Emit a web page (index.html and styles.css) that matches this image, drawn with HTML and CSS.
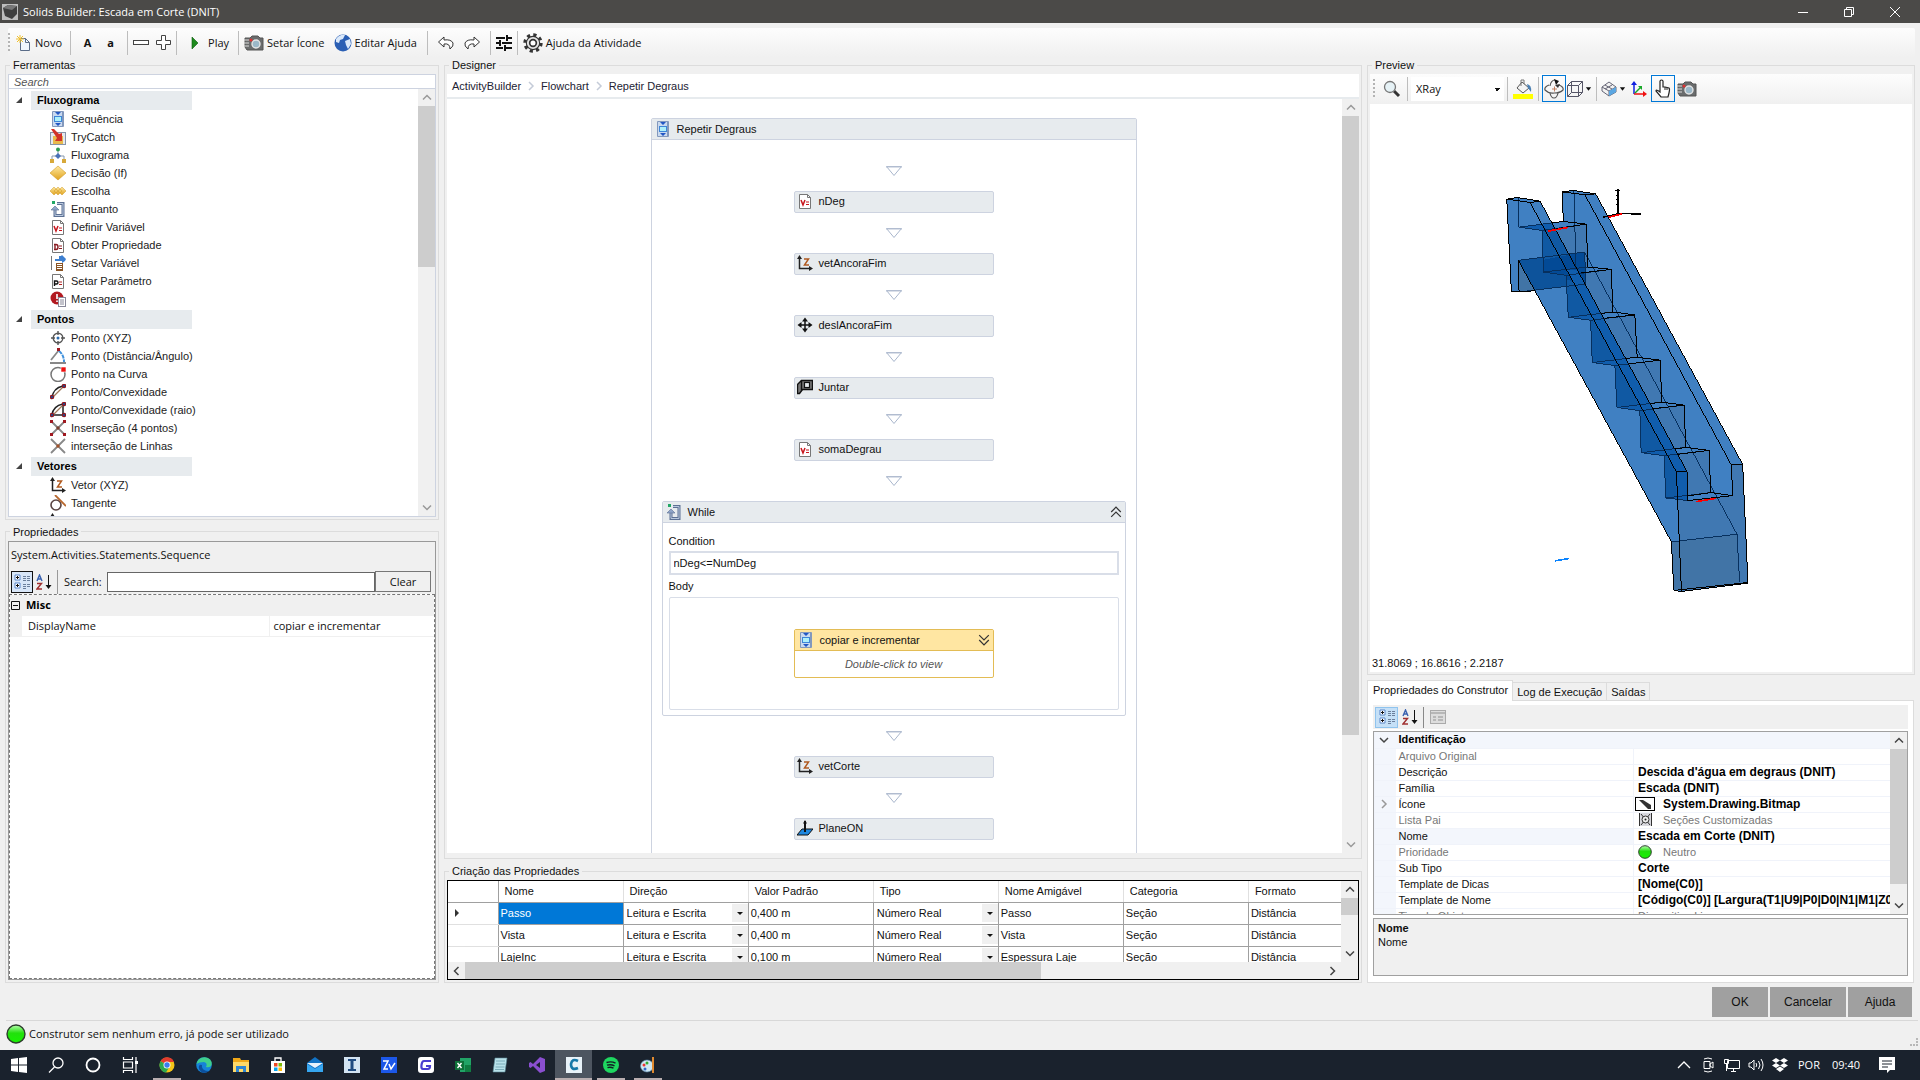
FILE: index.html
```html
<!DOCTYPE html>
<html lang="pt-BR">
<head>
<meta charset="utf-8">
<title>Solids Builder: Escada em Corte (DNIT)</title>
<link rel="stylesheet" href="styles.css">
</head>
<body>
<svg class="defs" aria-hidden="true">
  <defs>
    <linearGradient id="gGold" x1="0" y1="0" x2="0" y2="1"><stop offset="0" stop-color="#ffe9a0"/><stop offset="1" stop-color="#e0a21c"/></linearGradient>
    <linearGradient id="gGreen" x1="0" y1="0" x2="0" y2="1"><stop offset="0" stop-color="#b8ffb0"/><stop offset=".45" stop-color="#22e00c"/><stop offset="1" stop-color="#17f200"/></linearGradient>
    <symbol id="seq" viewBox="0 0 16 16"><rect x="2" y="0" width="12" height="16" rx="1" fill="#8298bd"/><rect x="3" y="1" width="9" height="14" fill="#c9d9ef"/><rect x="4.500" y="5.500" width="7" height="5" fill="#aef0fa" stroke="#3f86d8"/><path d="M5 1h6L8 4zM5 12h6l-3 3z" fill="#2257c4"/></symbol>
    <symbol id="try" viewBox="0 0 16 16"><rect x=".5" y="3.500" width="15" height="12" fill="#e4e8ee" stroke="#8794a8"/><rect x="3" y="7" width="10" height="8" fill="#e8b94b"/><path d="M1 0h3l5 5 3-1v8H5l2-3z" fill="#d23228"/></symbol>
    <symbol id="flow" viewBox="0 0 16 16"><path d="M8 3v6M2 12V9h12v3" stroke="#8798ad" fill="none"/><circle cx="8" cy="2.500" r="2" fill="#2c9a52"/><path d="M8 6l3 3-3 3-3-3z" fill="#4a72b8"/><path d="M0 12h4v4H0zM12 12h4v4h-4z" fill="#d8a93a"/></symbol>
    <symbol id="dec" viewBox="0 0 16 16"><path d="M8 1l8 7-8 7-8-7z" fill="url(#gGold)" stroke="#d19b26" stroke-width=".6"/></symbol>
    <symbol id="esc" viewBox="0 0 16 16"><g fill="url(#gGold)" stroke="#d19b26" stroke-width=".5"><path d="M4 4l4 4-4 4-4-4zM8 4l4 4-4 4-4-4zM12 4l4 4-4 4-4-4z"/></g></symbol>
    <symbol id="while" viewBox="0 0 16 16"><path d="M7 2.500h6v12H5V9" stroke="#5d7194" stroke-width="3" fill="none"/><path d="M7 2.500h6v12H5V9" stroke="#b9c8de" fill="none"/><path d="M1 9l4-4 4 4z" fill="#8fa4c8" stroke="#5d7194" stroke-width=".6"/><rect x="2" y="0" width="3" height="3" fill="#22a866"/></symbol>
    <symbol id="page" viewBox="0 0 16 16"><path d="M2.500 1.500h8l3 3v11h-11z" fill="#fff" stroke="#777"/><path d="M10.500 1.500v3h3" fill="none" stroke="#777"/></symbol>
    <symbol id="defv" viewBox="0 0 16 16"><use href="#page"/><path d="M4 7l2 5 2-5" stroke="#c8161d" stroke-width="1.500" fill="none"/><path d="M9 9h3M9 11.500h3" stroke="#c8161d" stroke-width="1.200"/></symbol>
    <symbol id="obt" viewBox="0 0 16 16"><use href="#page"/><path d="M4 7.500h2q2 0 2 2.500t-2 2.500H4M5 8v4" stroke="#8a1c22" stroke-width="1.400" fill="none"/><path d="M9 9h3M9 11.500h3" stroke="#8a1c22" stroke-width="1.200"/></symbol>
    <symbol id="par" viewBox="0 0 16 16"><use href="#page"/><path d="M4.500 13V8h2q1.500 0 1.500 1.500T6.500 11h-2" stroke="#111" stroke-width="1.400" fill="none"/><path d="M9 9h3M9 11.500h3" stroke="#b02020" stroke-width="1.200"/></symbol>
    <symbol id="setv" viewBox="0 0 16 16"><path d="M1.500 1v14" stroke="#777"/><path d="M5 4h4V1h2l1-1 4 4-1 2-3 2V6H5z" fill="#3c7fd0"/><rect x="6.500" y="8.500" width="6" height="7" fill="#fff" stroke="#8a5424"/><path d="M7 10.500h5M7 12.500h5M7 14.500h5" stroke="#8a5424"/></symbol>
    <symbol id="msg" viewBox="0 0 16 16"><circle cx="7" cy="7" r="6.500" fill="#b21920"/><path d="M7 3v5M7 9.500v1.500" stroke="#fff" stroke-width="1.600"/><rect x="8.500" y="6.500" width="7" height="9" fill="#fff" stroke="#889"/><path d="M10 9h4M10 11h4M10 13h4" stroke="#889"/></symbol>
    <symbol id="pt" viewBox="0 0 16 16"><circle cx="8" cy="8" r="4.800" fill="none" stroke="#555" stroke-width="1.400"/><path d="M8 1v4M8 11v4M1 8h4M11 8h4" stroke="#555" stroke-width="1.400"/><circle cx="8" cy="8" r="1.500" fill="#2d6db0"/></symbol>
    <symbol id="ang" viewBox="0 0 16 16"><path d="M1 12L9 2M0 15h16" stroke="#888" stroke-width="1.800" fill="none"/><path d="M9 3q5 4 5 11" stroke="#3f90dc" stroke-width="2" stroke-dasharray="4 1" fill="none"/><rect x="7" y="0" width="3" height="3" fill="#a01820"/></symbol>
    <symbol id="cur" viewBox="0 0 16 16"><circle cx="8" cy="8.500" r="7" fill="none" stroke="#777" stroke-width="1.500"/><rect x="11" y="1" width="5" height="5" fill="#f01010" stroke="#fff" stroke-width=".6"/></symbol>
    <symbol id="cvx" viewBox="0 0 16 16"><path d="M2 14Q3 4 13 2" stroke="#222" stroke-width="1.500" fill="none"/><path d="M2 14L14 2" stroke="#a0785a" stroke-width="1.200"/><g fill="#1b4f96" stroke="#8e1720" stroke-width="1.200"><circle cx="14" cy="2" r="1.700"/><circle cx="2" cy="13" r="1.700"/></g></symbol>
    <symbol id="cvr" viewBox="0 0 16 16"><path d="M2 13Q3 4 13 2v11z" stroke="#222" stroke-width="1.500" fill="none"/><path d="M2 14L14 2" stroke="#a0785a" stroke-width="1.200"/><g fill="#1b4f96" stroke="#8e1720" stroke-width="1.200"><circle cx="14" cy="2" r="1.700"/><circle cx="2" cy="13" r="1.700"/><circle cx="14" cy="13" r="1.700"/></g></symbol>
    <symbol id="int4" viewBox="0 0 16 16"><path d="M1 1l14 14M15 1L1 15" stroke="#888" stroke-width="1.800"/><path d="M0 0h3v3H0zM13 0h3v3h-3zM0 13h3v3H0zM13 13h3v3h-3z" fill="#a01820"/><rect x="6.500" y="6.500" width="3" height="3" fill="#7c4030"/></symbol>
    <symbol id="int" viewBox="0 0 16 16"><path d="M1 1l14 14M15 1L1 15" stroke="#888" stroke-width="1.800"/><rect x="6.500" y="6.500" width="3" height="3" fill="#a2532a"/></symbol>
    <symbol id="vec" viewBox="0 0 16 16"><path d="M2.500 3v10.500H13" stroke="#222" stroke-width="1.500" fill="none"/><path d="M0 4l2.500-4L5 4zM12 11l4 2.500-4 2.500z" fill="#222"/><path d="M7 4h4.500L7.500 10H12" stroke="#b05a20" stroke-width="1.500" fill="none"/></symbol>
    <symbol id="tan" viewBox="0 0 16 16"><circle cx="6" cy="10" r="5" fill="none" stroke="#5a4442" stroke-width="1.600"/><path d="M5 0l11 11" stroke="#b8682e" stroke-width="1.800"/></symbol>
    <symbol id="move" viewBox="0 0 16 16"><path d="M8 2v12M2 8h12" stroke="#111" stroke-width="1.500"/><path d="M5 4.500L8 .5l3 4zM5 11.500l3 4 3-4zM4.500 5l-4 3 4 3zM11.500 5l4 3-4 3z" fill="#111"/></symbol>
    <symbol id="join" viewBox="0 0 16 16"><path d="M.5 5.500l4-4h11v9h-10l-3 4h-2z" fill="#777" stroke="#111" stroke-width="1.400"/><path d="M4.500 1.500v10" stroke="#111" stroke-width="1.400"/><rect x="7.500" y="3.500" width="5" height="5" fill="#e7ebee" stroke="#111" stroke-width="1.200"/></symbol>
    <symbol id="plane" viewBox="0 0 16 16"><path d="M5 9h11l-5 6H0z" fill="#1f88e0" stroke="#111"/><path d="M8 1v11" stroke="#111" stroke-width="2"/><path d="M6 3.500L8 0l2 3.500z" fill="#111"/></symbol>
    <symbol id="cam" viewBox="0 0 20 16"><path d="M1 3h5l2-2h6l2 2h3v12H3l-2-3z" fill="#6a6c6d" stroke="#555"/><path d="M0 5h5M0 8h5M0 11h5" stroke="#ddd"/><circle cx="12" cy="9" r="4" fill="#9bb8c8" stroke="#e4e4e4" stroke-width="1.400"/><circle cx="7" cy="5" r="1.500" fill="#e03030"/></symbol>
    <symbol id="cat" viewBox="0 0 16 16"><path d="M1 1h5v5H1zM1 9h5v5H1z" fill="#fff" stroke="#5a86c8"/><path d="M2 3.500h3M3.500 2v3M2 11.500h3M3.500 10v3" stroke="#111"/><path d="M9 2.500h3M13 2.500h3M9 4.500h3M13 4.500h3M9 6.500h3M13 6.500h3M9 10.500h3M13 10.500h3M9 12.500h3M13 12.500h3M9 14.500h3" stroke="#6b7f9c"/></symbol>
    <symbol id="az" viewBox="0 0 16 16"><path d="M1 7l2.500-6L6 7M2 5h3" stroke="#3a62b0" stroke-width="1.400" fill="none"/><path d="M1 9.500h4.500L1 15h5" stroke="#a03030" stroke-width="1.400" fill="none"/><path d="M12.500 1v13" stroke="#111"/><path d="M9.500 11h6l-3 4z" fill="#111"/></symbol>
    <symbol id="up" viewBox="0 0 10 10"><path d="M1 7l4-4 4 4" fill="none" stroke="currentColor" stroke-width="1.500"/></symbol>
    <symbol id="down" viewBox="0 0 10 10"><path d="M1 3l4 4 4-4" fill="none" stroke="currentColor" stroke-width="1.500"/></symbol>
    <symbol id="left" viewBox="0 0 10 10"><path d="M7 1L3 5l4 4" fill="none" stroke="currentColor" stroke-width="1.500"/></symbol>
    <symbol id="right" viewBox="0 0 10 10"><path d="M3 1l4 4-4 4" fill="none" stroke="currentColor" stroke-width="1.500"/></symbol>
    <symbol id="tri" viewBox="0 0 16 10"><path d="M.5.5h15L8 9.500z" fill="#fff" stroke="#a9b6cc"/><path d="M0 1h16" stroke="#b8c2d4" stroke-width="1"/></symbol>
    <symbol id="ball" viewBox="0 0 20 20"><circle cx="10" cy="10" r="9" fill="url(#gGreen)" stroke="#2c3c2c" stroke-width="1.400"/></symbol>
    <symbol id="caret" viewBox="0 0 8 4"><path d="M1 0h6L4 4z" fill="#111"/></symbol>
  </defs>
</svg>

<header class="titlebar">
  <svg class="i16" viewBox="0 0 16 16"><rect width="16" height="16" fill="#bdbdbd"/><path d="M1 4l5-3 9 1v8l-5 5-7-3z" fill="#3f3f3f"/><path d="M1 4l5-3 9 1-5 4z" fill="#777"/></svg>
  <h1>Solids Builder: Escada em Corte (DNIT)</h1>
  <div class="winbtns">
    <button aria-label="Minimizar"><svg viewBox="0 0 10 10"><path d="M0 5.500h10" stroke="#fff"/></svg></button>
    <button aria-label="Restaurar"><svg viewBox="0 0 10 10"><path d="M.5 2.500h7v7h-7zM2.500 2.500v-2h7v7h-2" fill="none" stroke="#fff"/></svg></button>
    <button aria-label="Fechar"><svg viewBox="0 0 10 10"><path d="M0 0l10 10M10 0L0 10" stroke="#fff"/></svg></button>
  </div>
</header>

<nav class="toolbar">
  <span class="grip"></span>
  <button><svg class="i16" viewBox="0 0 16 16"><path d="M4.500 3.500h5l4 4v8h-9z" fill="#eef5ff" stroke="#5a6c88"/><path d="M9.500 3.500v4h4" fill="none" stroke="#5a6c88"/><path d="M4 0v8M0 4h8M1 1l6 6M7 1L1 7" stroke="#f0c030"/></svg>Novo</button>
  <span class="sep"></span>
  <button class="letter">A</button><button class="letter">a</button>
  <span class="sep"></span>
  <button class="first" aria-label="Recolher"><svg class="i16" viewBox="0 0 16 16"><rect x=".5" y="5.500" width="15" height="4" fill="#fff" stroke="#444"/></svg></button>
  <button class="slim" aria-label="Expandir"><svg class="i16" viewBox="0 0 16 16"><path d="M6.500.5h4v5h5v4h-5v5h-4v-5h-5v-4h5z" fill="#fff" stroke="#444"/></svg></button>
  <span class="sep"></span>
  <button class="play"><svg class="i16" viewBox="0 0 16 16"><path d="M6 2l6 6-6 6z" fill="#1d8a1d" stroke="#0c5a0c" stroke-width=".6"/></svg>Play</button>
  <span class="sep"></span>
  <button class="first"><svg class="i20"><use href="#cam"/></svg>Setar Ícone</button>
  <button class="help"><svg class="i18" viewBox="0 0 18 18"><circle cx="9" cy="9" r="8.500" fill="#2b5fb4"/><path d="M2 5q4-5 9-4l-2 4-3 1-1 3-3-1zM11 7l5-2 1 5-3 5-2-4z" fill="#dbe9fa"/></svg>Editar Ajuda</button>
  <span class="sep"></span>
  <button class="wide" aria-label="Desfazer"><svg class="i16" viewBox="0 0 16 16"><path d="M6 2L.5 7 6 12V9q6-1 6 5 4-3 3-6-2-4-9-3z" fill="#fff" stroke="#333"/></svg></button>
  <button class="wide" aria-label="Refazer"><svg class="i16" viewBox="0 0 16 16"><path d="M10 2l5.500 5L10 12V9q-6-1-6 5-4-3-3-6 2-4 9-3z" fill="#fff" stroke="#333"/></svg></button>
  <span class="sep"></span>
  <button class="slim" aria-label="Opções"><svg class="i16" viewBox="0 0 16 16"><path d="M0 3h9M12 3h4M0 8h3M6 8h10M0 13h7M10 13h6" stroke="#111" stroke-width="2"/><path d="M11 0v6M4 5v6M9 10v6" stroke="#111" stroke-width="2"/></svg></button>
  <span class="sep"></span>
  <button class="slim"><svg class="i20" viewBox="0 0 18 18"><circle cx="9" cy="9" r="7.200" fill="none" stroke="#333" stroke-width="3" stroke-dasharray="2.830 2.830"/><circle cx="9" cy="9" r="6" fill="#e4e4e4" stroke="#333"/><circle cx="9" cy="9" r="3" fill="#fff" stroke="#333" stroke-width="1.500"/></svg>Ajuda da Atividade</button>
</nav>

<main class="main">
  <div class="col left">
    <fieldset class="tools">
      <legend>Ferramentas</legend>
      <input class="search" type="text" placeholder="Search" aria-label="Search">
      <div class="treebox">
        <div class="tree">
          <h2><span>Fluxograma</span></h2>
          <ul>
            <li><svg class="i16"><use href="#seq"/></svg>Sequência</li>
            <li><svg class="i16"><use href="#try"/></svg>TryCatch</li>
            <li><svg class="i16"><use href="#flow"/></svg>Fluxograma</li>
            <li><svg class="i16"><use href="#dec"/></svg>Decisão (If)</li>
            <li><svg class="i16"><use href="#esc"/></svg>Escolha</li>
            <li><svg class="i16"><use href="#while"/></svg>Enquanto</li>
            <li><svg class="i16"><use href="#defv"/></svg>Definir Variável</li>
            <li><svg class="i16"><use href="#obt"/></svg>Obter Propriedade</li>
            <li><svg class="i16"><use href="#setv"/></svg>Setar Variável</li>
            <li><svg class="i16"><use href="#par"/></svg>Setar Parâmetro</li>
            <li><svg class="i16"><use href="#msg"/></svg>Mensagem</li>
          </ul>
          <h2><span>Pontos</span></h2>
          <ul>
            <li><svg class="i16"><use href="#pt"/></svg>Ponto (XYZ)</li>
            <li><svg class="i16"><use href="#ang"/></svg>Ponto (Distância/Ângulo)</li>
            <li><svg class="i16"><use href="#cur"/></svg>Ponto na Curva</li>
            <li><svg class="i16"><use href="#cvx"/></svg>Ponto/Convexidade</li>
            <li><svg class="i16"><use href="#cvr"/></svg>Ponto/Convexidade (raio)</li>
            <li><svg class="i16"><use href="#int4"/></svg>Inserseção (4 pontos)</li>
            <li><svg class="i16"><use href="#int"/></svg>interseção de Linhas</li>
          </ul>
          <h2><span>Vetores</span></h2>
          <ul>
            <li><svg class="i16"><use href="#vec"/></svg>Vetor (XYZ)</li>
            <li><svg class="i16"><use href="#tan"/></svg>Tangente</li>
            <li><svg class="i16"><use href="#vec"/></svg>Vetor Ponto a Ponto</li>
          </ul>
        </div>
        <div class="vscroll light"><svg><use href="#up"/></svg><div class="track"><i class="thumb tree-thumb"></i></div><svg><use href="#down"/></svg></div>
      </div>
    </fieldset>
    <fieldset class="props">
      <legend>Propriedades</legend>
      <div class="propbox">
        <p class="typename">System.Activities.Statements.Sequence</p>
        <div class="proptools">
          <button class="on" aria-label="Por categoria"><svg class="i16"><use href="#cat"/></svg></button>
          <button aria-label="Alfabética"><svg class="i16"><use href="#az"/></svg></button>
          <span class="sep"></span>
          <label for="psearch">Search:</label>
          <input id="psearch" type="text">
          <button class="clear">Clear</button>
        </div>
        <div class="proplist">
          <h3><svg viewBox="0 0 9 9"><path d="M.5.5h8v8h-8zM2 4.500h5" fill="none" stroke="#111"/></svg>Misc</h3>
          <div class="proprow"><span>DisplayName</span><span>copiar e incrementar</span></div>
        </div>
      </div>
    </fieldset>
  </div>

  <div class="col center">
    <fieldset class="designer">
      <legend>Designer</legend>
      <nav class="crumbs"><a href="#b">ActivityBuilder</a><svg><use href="#right"/></svg><a href="#f">Flowchart</a><svg><use href="#right"/></svg><a href="#r">Repetir Degraus</a></nav>
      <div class="canvasbox">
        <div class="canvas">
          <section class="sequence">
            <h2 class="acthead"><svg class="i16"><use href="#seq"/></svg>Repetir Degraus</h2>
            <div class="steps">
              <svg class="tri"><use href="#tri"/></svg>
              <div class="act"><svg class="i16"><use href="#defv"/></svg>nDeg</div>
              <svg class="tri"><use href="#tri"/></svg>
              <div class="act"><svg class="i16"><use href="#vec"/></svg>vetAncoraFim</div>
              <svg class="tri"><use href="#tri"/></svg>
              <div class="act"><svg class="i16"><use href="#move"/></svg>deslAncoraFim</div>
              <svg class="tri"><use href="#tri"/></svg>
              <div class="act"><svg class="i16"><use href="#join"/></svg>Juntar</div>
              <svg class="tri"><use href="#tri"/></svg>
              <div class="act"><svg class="i16"><use href="#defv"/></svg>somaDegrau</div>
              <svg class="tri"><use href="#tri"/></svg>
              <section class="while">
                <h2 class="acthead"><svg class="i16"><use href="#while"/></svg>While<svg class="chev" viewBox="0 0 10 10"><path d="M1 5l4-4 4 4M1 9l4-4 4 4" fill="none" stroke="#333"/></svg></h2>
                <div class="whilebody">
                  <label for="cond">Condition</label>
                  <input id="cond" type="text" value="nDeg&lt;=NumDeg">
                  <span class="lbl">Body</span>
                  <div class="slot">
                    <div class="picked">
                      <h2 class="acthead"><svg class="i16"><use href="#seq"/></svg>copiar e incrementar<svg class="chev" viewBox="0 0 10 10"><path d="M1 1l4 4 4-4M1 5l4 4 4-4" fill="none" stroke="#333"/></svg></h2>
                      <p>Double-click to view</p>
                    </div>
                  </div>
                </div>
              </section>
              <svg class="tri"><use href="#tri"/></svg>
              <div class="act"><svg class="i16"><use href="#vec"/></svg>vetCorte</div>
              <svg class="tri"><use href="#tri"/></svg>
              <div class="act"><svg class="i16"><use href="#plane"/></svg>PlaneON</div>
            </div>
          </section>
        </div>
        <div class="vscroll light"><svg><use href="#up"/></svg><div class="track"><i class="thumb canvas-thumb"></i></div><svg><use href="#down"/></svg></div>
      </div>
    </fieldset>
    <fieldset class="creation">
      <legend>Criação das Propriedades</legend>
      <div class="gridbox">
        <div class="gridtop">
          <div class="gridclip">
            <table class="grid">
              <thead><tr><th class="rh"></th><th>Nome</th><th>Direção</th><th>Valor Padrão</th><th>Tipo</th><th>Nome Amigável</th><th>Categoria</th><th>Formato</th></tr></thead>
              <tbody>
                <tr><td class="rh"><svg viewBox="0 0 6 10"><path d="M1 1v8l4-4z" fill="#333"/></svg></td><td class="sel">Passo</td><td class="dd"><select aria-label="Direção"><option>Leitura e Escrita</option></select></td><td>0,400 m</td><td class="dd"><select aria-label="Tipo"><option>Número Real</option></select></td><td>Passo</td><td>Seção</td><td>Distância</td></tr>
                <tr><td class="rh"></td><td>Vista</td><td class="dd"><select aria-label="Direção"><option>Leitura e Escrita</option></select></td><td>0,400 m</td><td class="dd"><select aria-label="Tipo"><option>Número Real</option></select></td><td>Vista</td><td>Seção</td><td>Distância</td></tr>
                <tr><td class="rh"></td><td>LajeInc</td><td class="dd"><select aria-label="Direção"><option>Leitura e Escrita</option></select></td><td>0,100 m</td><td class="dd"><select aria-label="Tipo"><option>Número Real</option></select></td><td>Espessura Laje</td><td>Seção</td><td>Distância</td></tr>
              </tbody>
            </table>
          </div>
          <div class="vscroll"><svg><use href="#up"/></svg><div class="track"><i class="thumb grid-thumb"></i></div><svg><use href="#down"/></svg></div>
        </div>
        <div class="hscroll"><svg><use href="#left"/></svg><div class="track"><i class="thumb"></i></div><svg><use href="#right"/></svg></div>
      </div>
    </fieldset>
  </div>

  <div class="col right">
    <fieldset class="preview">
      <legend>Preview</legend>
      <div class="pvtools">
        <span class="grip"></span>
        <button aria-label="Zoom"><svg class="i18" viewBox="0 0 18 18"><path d="M11 11l5 5" stroke="#333" stroke-width="3"/><circle cx="7" cy="7" r="5.500" fill="#e6f2f6" stroke="#777" stroke-width="1.300"/></svg></button>
        <span class="sep"></span>
        <select class="combo" aria-label="Modo"><option>XRay</option></select>
        <span class="sep"></span>
        <button aria-label="Cor"><svg class="i20" viewBox="0 0 20 20"><rect y="15" width="20" height="5" fill="#ff0"/><path d="M9 3l7 6-6 5-6-5z" fill="#f4f4f4" stroke="#555"/><path d="M8 7V1h3v4" fill="none" stroke="#777"/><path d="M14 5q5 1 4 8l-3-4z" fill="#4a80b4"/></svg></button>
        <span class="sep"></span>
        <button class="on" aria-label="Órbita"><svg class="i20" viewBox="0 0 20 20"><path d="M6 14q1 5 4 5t4-5M6 7q1-6 5-6" fill="none" stroke="#555" stroke-width="1.200"/><path d="M5 6Q0 8 1 11q4 4 9 3M15 6q5 2 4 5-3 3-9 3" fill="none" stroke="#555" stroke-width="1.200"/><path d="M8 10h5M10.500 7.500v5" stroke="#c08060"/><path d="M10 0l5 2-3 4z" fill="#111"/><path d="M11 6l5-1-2 4" fill="#333"/></svg></button>
        <button class="drop" aria-label="Vista"><svg class="i16" viewBox="0 0 16 16"><path d="M.5 4.500h11v11H.5zM4.500.5h11v11h-11zM.5 4.500l4-4M11.500 4.500l4-4M11.500 15.500l4-4M.5 15.500l4-4" fill="none" stroke="#556"/></svg><svg class="caret"><use href="#caret"/></svg></button>
        <span class="sep"></span>
        <button class="drop" aria-label="Face"><svg class="i16" viewBox="0 0 16 16"><path d="M1 6l7-5 7 5v5l-7 4-7-5z" fill="#f2f2f2" stroke="#667"/><path d="M1 6l7 4 7-4M8 10v5M4 4l7 4M11 4L4 8" fill="none" stroke="#667"/><path d="M8 10l7-4v5l-7 4z" fill="#5ba7e2"/></svg><svg class="caret"><use href="#caret"/></svg></button>
        <button aria-label="Eixos"><svg class="i16" viewBox="0 0 16 16"><path d="M3 3v10" stroke="#1020e0" stroke-width="1.500"/><path d="M0 4l3-4 3 4z" fill="#1020e0"/><path d="M3 13h10" stroke="#f01010" stroke-width="1.500"/><path d="M12 10l4 3-4 3z" fill="#f01010"/><path d="M4 12l6-6" stroke="#18a828" stroke-width="1.500"/><path d="M7 5h4v4z" fill="#18a828"/></svg></button>
        <button class="on" aria-label="Mover"><svg class="i20" viewBox="0 0 20 20"><path d="M7 11V2q1.500-2 3 0v6h2l4 1q1 1 0 5l-1 4H8l-5-6q0-2 4 1z" fill="#fff" stroke="#222" stroke-width="1.200"/><path d="M12 8v3M14 9v2" stroke="#222"/></svg></button>
        <button aria-label="Foto"><svg class="i20"><use href="#cam"/></svg></button>
      </div>
      <svg class="model" viewBox="0 0 543 551" role="img" aria-label="Escada">
        <defs>
          <clipPath id="wall"><path d="M78 88L178 94L620 907L622 994L596 1118L573 1118L113 272L92 365Z"/></clipPath>
          <g id="risers"><path d="M185 182L317 163L322 292L188 307ZM256 317L392 299L397 427L263 443ZM330 452L463 436L470 563L335 579ZM403 588L539 572L544 698L409 714ZM478 724L611 707L616 834L482 850ZM551 859L686 843L691 970L556 986Z"/></g>
          <g id="treads"><path d="M115 172L248 155L317 163L185 182ZM188 307L322 292L392 299L256 317ZM263 443L397 427L463 436L330 452ZM335 579L470 563L539 572L403 588ZM409 714L544 698L611 707L478 724ZM482 850L616 834L686 843L551 859ZM556 986L691 970L757 979L622 994Z"/></g>
        </defs>
        <g transform="translate(111 66) scale(.33333)" shape-rendering="crispEdges" stroke-width="3">
          <path d="M78 88L110 83L178 94L213 158L248 155L245 66L278 62L345 72L787 885L803 1242L603 1267L580 1264L573 1118L163 362L132 367L92 365Z" fill="#4080c2"/>
          <path d="M588 908L620 907L622 994L757 979L753 887L787 885L803 1242L603 1267Z" fill="#4078b2"/>
          <use href="#risers" fill="#4078b2"/>
          <path d="M573 1118L770 1095L778 1240L580 1264Z" fill="#4174a6"/>
          <path d="M113 272L312 247L316 343L115 367Z" fill="#0d539b"/>
          <path d="M113 272L163 362L115 367Z" fill="#4174a6"/>
          <g clip-path="url(#wall)"><use href="#risers" fill="#1059a3"/><use href="#treads" fill="#105dad"/></g>
          <path d="M188 270L312 247L315 343L257 330L256 317L188 307Z" fill="#034a96"/>
          <path d="M258 300L588 908L588 990L622 994L620 907L290 300Z" fill="#105dad"/>
          <g fill="none" stroke="#07305e">
            <path d="M312 247L770 1095L778 1240M573 1118L770 1095M112 83L115 172M280 62L286 295M113 272L312 247L316 343L115 367"/>
            <use href="#treads"/>
            <path d="M185 182L188 307M256 317L263 443M330 452L335 579M403 588L409 714M478 724L482 850M551 859L556 986"/>
          </g>
          <g fill="none" stroke="#000">
            <path d="M78 88L110 83L178 94L148 98ZM78 88L92 365L132 367L163 362M148 98L588 908L620 907L178 94M113 272L573 1118L580 1264L603 1267L803 1242L787 885L345 72L278 62L245 66L248 155L317 163L322 292L392 299L397 427L463 436L470 563L539 572L544 698L611 707L616 834L686 843L691 970L757 979L753 887L787 885M753 887L313 75L245 66M313 75L345 72M588 908L603 1267M620 907L622 994L757 979M580 1264L803 1240M622 980L691 970M113 272L115 367M213 160L248 155M225 177L317 163M300 310L392 299M372 446L463 436M360 432L397 427M445 583L539 572M433 567L470 563M517 718L611 707M508 703L544 698M592 855L686 843M583 839L616 834"/>
            <path d="M368 142L415 131L482 133M412 58V131" stroke-width="4"/><path d="M404 62h14M406 76h10M406 90h10M406 104h10" stroke-width="4"/>
          </g>
          <path d="M384 142L425 132M203 184L262 173M648 997L708 987" stroke="#f00" stroke-width="5"/>
          <path d="M222 1175L264 1168" stroke="#0a84ff" stroke-width="5"/>
        </g>
      </svg>
      <p class="coords">31.8069 ; 16.8616 ; 2.2187</p>
    </fieldset>

    <section class="builder">
      <div class="tabs"><button class="active">Propriedades do Construtor</button><button>Log de Execução</button><button>Saídas</button></div>
      <div class="tabpanel">
        <div class="pgtools">
          <button class="on" aria-label="Por categoria"><svg class="i16"><use href="#cat"/></svg></button>
          <button aria-label="Alfabética"><svg class="i16"><use href="#az"/></svg></button>
          <span class="sep"></span>
          <button aria-label="Páginas"><svg class="i16" viewBox="0 0 16 16"><rect x=".5" y="1.500" width="15" height="13" fill="#ddd" stroke="#aaa"/><path d="M1 4h14M3 8h3M3 11h3M8 8h5M8 11h5" stroke="#aaa" stroke-width="1.500"/></svg></button>
        </div>
        <div class="pgbox">
          <div class="pgclip">
            <table class="pg">
              <colgroup><col class="c-mark"><col class="c-name"><col></colgroup>
              <tbody>
                <tr class="cathead"><td><svg><use href="#down"/></svg></td><th colspan="2">Identificação</th></tr>
                <tr class="off"><td></td><th>Arquivo Original</th><td></td></tr>
                <tr><td></td><th>Descrição</th><td>Descida d'água em degraus (DNIT)</td></tr>
                <tr><td></td><th>Família</th><td>Escada (DNIT)</td></tr>
                <tr><td class="more"><svg><use href="#right"/></svg></td><th>Ícone</th><td class="pic"><svg viewBox="0 0 20 14"><rect x=".5" y=".5" width="19" height="13" fill="#fff" stroke="#000"/><path d="M4 3h4l8 5v4h-3z" fill="#333"/></svg>System.Drawing.Bitmap</td></tr>
                <tr class="off"><td></td><th>Lista Pai</th><td class="pic"><svg viewBox="0 0 20 14"><rect x="4" y="0" width="13" height="13" fill="#d8d8de"/><path d="M4.500 0v13M16.500 0v13M6 1l9 11M15 1L6 12" stroke="#333"/><circle cx="10.500" cy="6.500" r="3.500" fill="#eee" stroke="#333"/><circle cx="10.500" cy="6.500" r="1" fill="#222"/></svg>Seções Customizadas</td></tr>
                <tr class="cur"><td></td><th>Nome</th><td>Escada em Corte (DNIT)</td></tr>
                <tr class="off"><td></td><th>Prioridade</th><td class="pic"><svg><use href="#ball"/></svg>Neutro</td></tr>
                <tr><td></td><th>Sub Tipo</th><td>Corte</td></tr>
                <tr><td></td><th>Template de Dicas</th><td>[Nome(C0)]</td></tr>
                <tr><td></td><th>Template de Nome</th><td>[Código(C0)] [Largura(T1|U9|P0|D0|N1|M1|Z0|</td></tr>
                <tr class="off"><td></td><th>Tipo de Objeto</th><td>Dispositivo Linear</td></tr>
              </tbody>
            </table>
          </div>
          <div class="vscroll"><svg><use href="#up"/></svg><div class="track"><i class="thumb pg-thumb"></i></div><svg><use href="#down"/></svg></div>
        </div>
        <div class="desc"><b>Nome</b><p>Nome</p></div>
      </div>
    </section>
  </div>
</main>

<div class="actions"><button>OK</button><button class="mid">Cancelar</button><button class="aj">Ajuda</button></div>

<footer class="status"><svg class="i20"><use href="#ball"/></svg><span>Construtor sem nenhum erro, já pode ser utilizado</span>
  <svg class="sizegrip" viewBox="0 0 8 8"><path d="M6 0h2v2H6zM6 3h2v2H6zM3 6h2v2H3zM6 6h2v2H6zM0 6h2v2H0z" fill="#b8b8b8"/></svg></footer>

<nav class="taskbar">
  <div class="apps">
    <button aria-label="Iniciar"><svg viewBox="0 0 16 16"><path d="M0 2l7-1v6.500H0zM8 1l8-1v7.500H8zM0 8.500h7V15l-7-1zM8 8.500h8V16l-8-1z" fill="#fff"/></svg></button>
    <button aria-label="Pesquisar"><svg viewBox="0 0 16 16"><circle cx="10" cy="6" r="5" fill="none" stroke="#fff" stroke-width="1.300"/><path d="M6.500 10L1 15.500" stroke="#fff" stroke-width="1.300"/></svg></button>
    <button aria-label="Cortana"><svg viewBox="0 0 16 16"><circle cx="8" cy="8" r="6.500" fill="none" stroke="#fff" stroke-width="1.800"/></svg></button>
    <button aria-label="Visão de tarefas"><svg viewBox="0 0 16 16"><path d="M1.500 0v2.500h9V0M1.500 16v-2.500h9V16M1.500 5h9v6h-9zM14 0v16" fill="none" stroke="#fff" stroke-width="1.200"/><path d="M13 4h3v3h-3z" fill="#fff"/></svg></button>
    <button class="open" aria-label="Chrome"><svg viewBox="0 0 16 16"><circle cx="8" cy="8" r="7.500" fill="#f5c518"/><path d="M8 8L1.500 4.200A7.500 7.500 0 0 1 15 5H8z" fill="#e33b2e"/><path d="M8 8L1.500 4.200A7.500 7.500 0 0 0 7 15.500l3-5z" fill="#2da94f"/><circle cx="8" cy="8" r="3.500" fill="#fff"/><circle cx="8" cy="8" r="2.700" fill="#3b7ded"/></svg></button>
    <button aria-label="Edge"><svg viewBox="0 0 16 16"><circle cx="8" cy="8" r="7.800" fill="#1683d8"/><path d="M.5 7Q2 0 9 .3q7 1 6.700 7Q15 11 10 10q2-4-2-5-5 0-7.500 2z" fill="#3fcf8e"/><path d="M6 8q-1 6 7 6-3 2.500-7 1.500Q2 13 3 9q1-2 3-1z" fill="#0c4f9c"/></svg></button>
    <button aria-label="Explorador"><svg viewBox="0 0 16 16"><path d="M0 1h7l1 2h8v12H0z" fill="#f0a818"/><path d="M0 5h16v10H0z" fill="#ffd968"/><path d="M3 15V9h10v6h-3v-3H6v3z" fill="#2f86d2"/></svg></button>
    <button aria-label="Loja"><svg viewBox="0 0 16 16"><path d="M1 4h14v12H1z" fill="#fff"/><path d="M5 4V1h6v3" fill="none" stroke="#fff" stroke-width="1.300"/><path d="M4 6h3.500v3.500H4z" fill="#f04a24"/><path d="M8.500 6H12v3.500H8.500z" fill="#80bc06"/><path d="M4 10.500h3.500V14H4z" fill="#04a6f0"/><path d="M8.500 10.500H12V14H8.500z" fill="#ffba08"/></svg></button>
    <button aria-label="Email"><svg viewBox="0 0 16 16"><path d="M0 6l8-6 8 6v9H0z" fill="#1273c4"/><path d="M0 6h16l-8 5z" fill="#e8f3fc"/><path d="M0 7l8 5 8-5v8H0z" fill="#36a6f0"/></svg></button>
    <button aria-label="I"><svg viewBox="0 0 16 16"><rect width="16" height="16" fill="#d3e4f2"/><path d="M4 2h8v2H9.500v8H12v2H4v-2h2.500V4H4z" fill="#1f4b80"/></svg></button>
    <button aria-label="Zv"><svg viewBox="0 0 16 16"><rect width="16" height="16" fill="#1c57e8"/><path d="M2 4h5l-4 8h4M8 7l2 5 4-6" stroke="#fff" stroke-width="1.500" fill="none"/></svg></button>
    <button aria-label="G"><svg viewBox="0 0 16 16"><rect width="16" height="16" rx="3" fill="#fff"/><path d="M13 4H6Q4 4 3.500 8T5 12h5q2 0 2-3H8" stroke="#4a3fd0" stroke-width="2.200" fill="none"/></svg></button>
    <button aria-label="Excel"><svg viewBox="0 0 16 16"><path d="M5 1h11v14H5z" fill="#21a366"/><path d="M10 8h6v7h-6z" fill="#107c41"/><path d="M0 4h9v9H0z" fill="#0f7038"/><path d="M2.500 6l4 5M6.500 6l-4 5" stroke="#fff" stroke-width="1.400"/></svg></button>
    <button aria-label="Bloco de notas"><svg viewBox="0 0 16 16"><path d="M3 1h12l-2 14H1z" fill="#b9e2ea" stroke="#5b8b98" stroke-width=".6"/><path d="M4 4h9M4 7h9M3.500 10h9M3 12.500h9" stroke="#6a9fac" stroke-width=".8"/></svg></button>
    <button aria-label="Visual Studio"><svg viewBox="0 0 16 16"><path d="M11 0l5 2v12l-5 2-7-7-2.500 2L0 10V6l1.500-1L4 7zM11 5L7 8l4 3z" fill="#8a4fd0" fill-rule="evenodd"/></svg></button>
    <button class="open current" aria-label="C"><svg viewBox="0 0 16 16"><rect width="16" height="16" fill="#e8f2f8"/><path d="M12 4q-6-3-7 3 0 7 7 4" stroke="#1778a8" stroke-width="2.600" fill="none"/></svg></button>
    <button class="open" aria-label="Spotify"><svg viewBox="0 0 16 16"><circle cx="8" cy="8" r="8" fill="#1ed760"/><path d="M3.500 5.500q5-1.500 9 .7M4 8.200q4-1.200 7.500.6M4.500 10.700q3-1 6 .5" stroke="#121c22" stroke-width="1.400" fill="none"/></svg></button>
    <button class="open" aria-label="Paint"><svg viewBox="0 0 16 16"><ellipse cx="7" cy="9" rx="6.500" ry="6" fill="#cfe8f4" stroke="#5f8fb0" stroke-width=".6"/><circle cx="4" cy="8" r="1.500" fill="#e33"/><circle cx="7" cy="6" r="1.500" fill="#3a3"/><circle cx="5" cy="12" r="1.500" fill="#36c"/><path d="M13 0v16" stroke="#e08a30" stroke-width="2"/></svg></button>
  </div>
  <div class="tray">
    <svg viewBox="0 0 16 16"><path d="M2 11l6-6 6 6" fill="none" stroke="#fff" stroke-width="1.300"/></svg>
    <svg viewBox="0 0 16 16"><path d="M4 4.500h6v7H4zM10 7l3-2v6l-3-2zM4 2q4-2 8 0M4 14q4 2 8 0" fill="none" stroke="#fff"/></svg>
    <svg viewBox="0 0 16 16"><path d="M3.500 3.500h12v8h-12zM7 14.500h5M9.500 12v2M.5 2.500h4v4h-4zM2.500 7v7" fill="none" stroke="#fff"/></svg>
    <svg viewBox="0 0 16 16"><path d="M1 6h2l3-3v10l-3-3H1zM8 6q1.500 2 0 4M10.500 4q3 4 0 8M13 2q4 6 0 12" fill="none" stroke="#fff"/></svg>
    <svg viewBox="0 0 16 16"><path d="M4 1l4 2.500L4 6 0 3.500zM12 1l4 2.500L12 6 8 3.500zM4 6l4 2.500L4 11 0 8.500zM12 6l4 2.500-4 2.500-4-2.500zM8 9.500l4 2.500-4 3-4-3z" fill="#fff"/></svg>
    <span>POR</span><time>09:40</time>
    <svg class="note" viewBox="0 0 16 16"><path d="M0 0h16v13h-5l-3 3v-3H0z" fill="#fff"/><path d="M3 4h10M3 7h10M3 10h6" stroke="#1a222d"/></svg>
  </div>
</nav>
</body>
</html>
```
FILE: styles.css
```css
* { box-sizing: border-box; }
body {
  margin: 0;
  min-height: 100vh;
  display: flex;
  flex-direction: column;
  background: #f0f0f0;
  color: #111;
  font: 11px/14px "Liberation Sans", Arial, sans-serif;
}
h1, h2, h3, p, ul { margin: 0; padding: 0; font-size: inherit; font-weight: inherit; }
ul { list-style: none; }
button, input, select { font: inherit; color: inherit; margin: 0; border-radius: 0; }
button { border: 0; padding: 0; background: none; }
svg { display: block; flex: none; }
.defs { position: absolute; width: 0; height: 0; }
.i16 { width: 16px; height: 16px; }
.i18 { width: 18px; height: 18px; }
.i20 { width: 20px; height: 20px; }
.sep { flex: none; width: 1px; height: 24px; background: #bdbdbd; margin: 0 5px; }
.grip { flex: none; width: 2px; height: 20px; background: repeating-linear-gradient(#b4b4b4 0 2px, transparent 2px 4px); }

/* Title bar */
.titlebar {
  flex: none;
  height: 23px;
  display: flex;
  align-items: center;
  gap: 5px;
  padding-left: 2px;
  background: #4b4a48;
  color: #fff;
  font: 11px/16px "Open Sans", "Noto Sans", sans-serif;
}
.winbtns { display: flex; margin-left: auto; padding-right: 2px; }
.winbtns button { width: 46px; height: 20px; display: flex; align-items: center; justify-content: center; }
.winbtns svg { width: 10px; height: 10px; }

/* Main toolbar */
.toolbar {
  flex: none;
  height: 29px;
  margin: 5px 5px 1px 8px;
  display: flex;
  align-items: center;
  border-radius: 2px;
  background: linear-gradient(#fdfdfd, #f0f0f0);
  font: 11px/16px "Open Sans", "Noto Sans", sans-serif;
}
.toolbar button { display: flex; align-items: center; gap: 3px; padding: 0 3px; }
.toolbar .grip { margin-right: 3px; }
.toolbar .letter { width: 23px; justify-content: center; font-weight: 700; }
.toolbar .play { gap: 6px; padding: 0 4px; }
.toolbar .slim { padding: 0; }
.toolbar .first { padding: 0 6px 0 0; }
.toolbar .wide { padding: 0 5px; }
.toolbar .help { padding-right: 5px; }

/* Three columns */
.main {
  flex: 1;
  min-height: 0;
  display: grid;
  grid-template-columns: minmax(0, 434fr) minmax(0, 918fr) minmax(0, 548fr);
  gap: 5px;
  padding: 0 5px;
}
.col { display: flex; flex-direction: column; gap: 5px; min-height: 0; }
fieldset {
  margin: 0;
  padding: 2px;
  border: 1px solid #dcdcdc;
  min-width: 0;
  min-height: 0;
  display: flex;
  flex-direction: column;
}
legend { padding: 0 3px; margin-left: 2px; height: 14px; }
.tools { flex: 462 1 0; }
.props { flex: 458 1 0; }
.designer { flex: 1 1 0; }
.creation { flex: none; height: 119px; }
.preview { flex: 1 1 0; }
.builder { flex: none; }

/* Scroll bars */
.vscroll { flex: none; width: 17px; display: flex; flex-direction: column; align-items: center; background: #f0f0f0; color: #444; }
.vscroll svg { width: 10px; height: 17px; }
.vscroll .track { flex: 1; width: 17px; min-height: 0; }
.light { color: #999; }
.thumb { display: block; background: #cdcdcd; }
.tree-thumb { height: 41%; }
.canvas-thumb { height: 86%; }
.grid-thumb { height: 17px; }
.pg-thumb { height: 91%; }
.hscroll { flex: none; height: 17px; display: flex; align-items: center; padding-right: 17px; background: #f0f0f0; color: #444; }
.hscroll svg { width: 17px; height: 10px; }
.hscroll .track { flex: 1; }
.hscroll .thumb { width: 67%; height: 17px; }

/* Toolbox */
.search { flex: none; height: 15px; padding: 0 5px; border: 1px solid #cdd3e0; background: #fff; font-style: italic; line-height: 13px; }
.search::placeholder { color: #555; opacity: 1; }
.treebox { flex: 1; min-height: 0; display: flex; background: #fff; border: 1px solid #cdd3e0; border-top-width: 0; }
.tree { flex: 1; min-width: 0; height: 100%; overflow: hidden; padding-top: 1px; }
.tree h2 { display: flex; align-items: center; height: 20px; padding-left: 7px; font-weight: 700; color: #000; }
.tree h2::before { content: ""; border: 3px solid #444; border-top-color: transparent; border-left-color: transparent; }
.tree h2 span { margin-left: 9px; width: 161px; height: 19px; padding-left: 6px; line-height: 19px; background: #e7ebee; }
.tree ul { padding-bottom: 1px; }
.tree li { height: 18px; display: flex; align-items: center; gap: 5px; padding-left: 41px; color: #222; }

/* Property inspector */
.propbox { flex: 1; display: flex; flex-direction: column; border: 1px solid #999; font: 11px/16px "Open Sans", "Noto Sans", sans-serif; }
.typename { padding: 5px 2px 7px; }
.proptools { display: flex; align-items: center; height: 24px; padding: 0 4px 0 2px; }
.proptools button { width: 22px; height: 22px; display: flex; align-items: center; justify-content: center; }
.proptools .on { border: 1px solid #111; background: #d8e6f8; }
.proptools .sep { margin: 0 6px 0 2px; background: #999; }
.proptools input { flex: 1; min-width: 0; height: 20px; margin-left: 5px; border: 1px solid #666; background: #fff; }
.proptools .clear { width: 56px; height: 21px; border: 1px solid #777; background: #f0f0f0; }
.proplist { flex: 1; border: 1px dashed #777; background: #fff; }
.proplist h3 { display: flex; align-items: center; gap: 6px; height: 21px; padding-left: 1px; background: #f0f0f0; font-weight: 700; color: #000; }
.proplist h3 svg { width: 9px; height: 9px; }
.proprow { display: grid; grid-template-columns: 248fr 165fr; height: 21px; border-left: 12px solid #f0f0f0; border-bottom: 1px solid #f0f0f0; line-height: 20px; }
.proprow span { padding-left: 6px; }
.proprow span + span { padding-left: 3px; border-left: 1px solid #f0f0f0; }

/* Workflow designer */
.crumbs { flex: none; height: 25px; display: flex; align-items: center; gap: 5px; padding: 0 5px; background: #fff; border-bottom: 2px solid #e7ebee; color: #c4cbd8; }
.crumbs a { color: #223; text-decoration: none; }
.crumbs svg { width: 10px; height: 10px; }
.canvasbox { flex: 1; min-height: 0; display: flex; background: #fff; margin-bottom: 3px; }
.canvas { flex: 1; min-width: 0; height: 100%; overflow: hidden; display: flex; justify-content: center; padding: 19px 2px 0 0; }
.sequence { flex: none; width: 486px; min-height: 740px; height: max-content; border: 1px solid #cdd3e0; border-radius: 2px 2px 0 0; }
.acthead { display: flex; align-items: center; gap: 6px; height: 21px; padding: 0 3px 1px; background: #e7ebee; border-bottom: 1px solid #cdd3e0; color: #111; }
.chev { width: 12px; height: 12px; margin-left: auto; }
.steps { display: flex; flex-direction: column; align-items: center; gap: 15px; padding: 26px 10px; }
.tri { width: 16px; height: 10px; }
.act { width: 200px; height: 22px; display: flex; align-items: center; gap: 6px; padding: 0 2px 2px; background: #e7ebee; border: 1px solid #cdd3e0; border-radius: 2px; }
.while { width: 100%; border: 1px solid #cdd3e0; border-radius: 2px; }
.whilebody { display: flex; flex-direction: column; padding: 11px 6px 5px; }
.whilebody label, .lbl { height: 14px; }
.whilebody input { height: 24px; margin: 3px 0 4px; padding: 0 3px 1px; border: 2px solid #d9dee8; background: #fff; }
.slot { height: 113px; margin-top: 4px; display: flex; align-items: center; justify-content: center; border: 1px solid #d9dee8; border-radius: 2px; }
.picked { width: 200px; border: 1px solid #e3bc55; border-radius: 2px; }
.picked .acthead { background: #ffe6a2; border-color: #e3bc55; }
.picked p { height: 26px; line-height: 26px; text-align: center; font-style: italic; color: #555; }

/* Data grid */
.gridbox { flex: 1; min-height: 0; display: flex; flex-direction: column; border: 1px solid #000; background: #fff; }
.gridtop { flex: 1; min-height: 0; display: flex; overflow: hidden; }
.gridclip { flex: 1; min-width: 0; overflow: hidden; }
.grid { width: 926px; table-layout: fixed; border-collapse: collapse; }
.grid th, .grid td { height: 22px; padding: 0 2px; border-right: 1px solid #a0a0a0; border-bottom: 1px solid #a0a0a0; text-align: left; white-space: nowrap; }
.grid th { height: 21px; padding-left: 6px; font-weight: 400; border-right-color: #e0e0e0; }
.grid .rh { width: 50px; padding-left: 6px; border-right-color: #a0a0a0; }
.grid td.rh { border-bottom-color: #e0e0e0; }
.grid .rh svg { width: 6px; height: 10px; }
.grid .sel { background: #0078d7; color: #fff; }
.grid .dd { position: relative; padding: 0; }
.grid select {
  appearance: none;
  width: 100%;
  height: 20px;
  border: 0;
  padding: 0 3px;
  background: linear-gradient(#f0f0f0, #f0f0f0) right / 16px 18px no-repeat;
}
.grid .dd::after { content: ""; position: absolute; right: 5px; top: 9px; border: 3px solid transparent; border-top-color: #111; border-bottom-width: 0; }

/* 3D preview */
.pvtools { flex: none; height: 30px; display: flex; align-items: center; padding: 0 0 1px 3px; background: linear-gradient(#fdfdfd, #f0f0f0); }
.pvtools button { width: 24px; height: 27px; display: flex; align-items: center; justify-content: center; }
.pvtools .on { border: 1px solid #0078d7; }
.pvtools .drop { width: 27px; gap: 2px; }
.pvtools .caret { width: 7px; height: 4px; }
.pvtools .grip { margin-right: 5px; }
.pvtools .sep { margin: 0 3px; }
.combo {
  appearance: none;
  width: 93px;
  height: 24px;
  border: 0;
  padding: 0 5px;
  background: linear-gradient(to bottom right, #111 50%, transparent 50%) 86px 11px / 3px 3px no-repeat, linear-gradient(to bottom left, #111 50%, transparent 50%) 83px 11px / 3px 3px no-repeat, #fff;
  font: 11px/16px "Open Sans", "Noto Sans", sans-serif;
}
.model { flex: 1; width: 100%; min-height: 0; background: #fff; }
.coords { flex: none; height: 18px; padding-left: 2px; line-height: 18px; background: #fff; }

/* Builder properties */
.tabs { display: flex; align-items: flex-end; height: 20px; }
.tabs button { height: 18px; padding: 0 4px; border: 1px solid #dcdcdc; border-left: 0; border-bottom: 0; }
.tabs .active { position: relative; height: 21px; margin-bottom: -1px; padding: 0 4px 3px 5px; background: #fff; border-left: 1px solid #dcdcdc; }
.tabpanel { padding: 4px 5px 6px; background: #fff; border: 1px solid #dcdcdc; margin-right: 1px; }
.pgtools { display: flex; align-items: center; height: 24px; padding-left: 2px; background: #f0f0f0; }
.pgtools button { width: 23px; height: 21px; display: flex; align-items: center; justify-content: center; }
.pgtools .on { background: #c5e0f7; border: 1px solid #90c4ee; }
.pgtools .sep { height: 21px; margin: 0 2px; background: #888; }
.pgbox { display: flex; height: 184px; margin-top: 2px; border: 1px solid #a0a0a0; }
.pgclip { flex: 1; min-width: 0; height: 100%; overflow: hidden; }
.pg { width: 100%; table-layout: fixed; border-collapse: collapse; }
.c-mark { width: 21px; }
.c-name { width: 238px; }
.pg tr { height: 16px; }
.pg td, .pg th { height: 16px; padding: 0; line-height: 15px; text-align: left; white-space: nowrap; overflow: hidden; border-bottom: 1px solid #f0f3fa; }
.pg th { padding-left: 3px; font-weight: 400; }
.pg td { padding-left: 4px; border-left: 1px solid #f0f3fa; font-size: 12px; font-weight: 700; color: #000; }
.pg td:first-child { padding-left: 4px; background: #f3f6fc; }
.pg td svg { width: 10px; height: 10px; color: #444; }
.pg .more svg { color: #999; }
.pg .cathead th { background: #f3f6fc; font-weight: 700; color: #000; }
.pg .cur th { background: #f3f6fc; }
.pg .off th, .pg .off td { color: #777; font-size: 11px; font-weight: 400; }
.pg .pic { padding-left: 1px; }
.pg .pic svg { display: inline-block; vertical-align: top; width: 20px; height: 14px; margin-right: 8px; }
.desc { height: 58px; margin-top: 3px; padding: 2px 4px; border: 1px solid #a0a0a0; background: #f0f0f0; }

/* Footer */
.actions { flex: none; display: flex; justify-content: flex-end; gap: 2px; padding: 4px 8px 3px; font-size: 12px; }
.actions button { width: 56px; height: 30px; background: #a0a0a0; }
.actions .mid { width: 76px; }
.actions .aj { width: 64px; }
.status { flex: none; height: 30px; display: flex; align-items: center; gap: 3px; margin: 0 2px 0 6px; padding-bottom: 4px; border-top: 1px solid #d8d8d8; font: 11px/16px "Open Sans", "Noto Sans", sans-serif; }
.sizegrip { width: 8px; height: 8px; margin-left: auto; align-self: flex-end; }

/* Taskbar */
.taskbar { flex: none; height: 30px; display: flex; justify-content: space-between; background: #1a222d; color: #fff; }
.apps { display: flex; }
.apps button { width: 37px; height: 30px; display: flex; align-items: center; justify-content: center; }
.apps svg { width: 16px; height: 16px; }
.apps .open { background: linear-gradient(#b9aeb0, #b9aeb0) center bottom / 28px 2px no-repeat; }
.apps .current { background: linear-gradient(#b9aeb0, #b9aeb0) bottom / 100% 2px no-repeat, #4d5560; }
.tray { display: flex; align-items: center; gap: 8px; padding-right: 25px; font: 11px/16px "Open Sans", "Noto Sans", sans-serif; }
.tray svg { width: 16px; height: 16px; }
.tray span, .tray time { padding: 0 2px; }
.tray .note { margin-left: 9px; }
```
